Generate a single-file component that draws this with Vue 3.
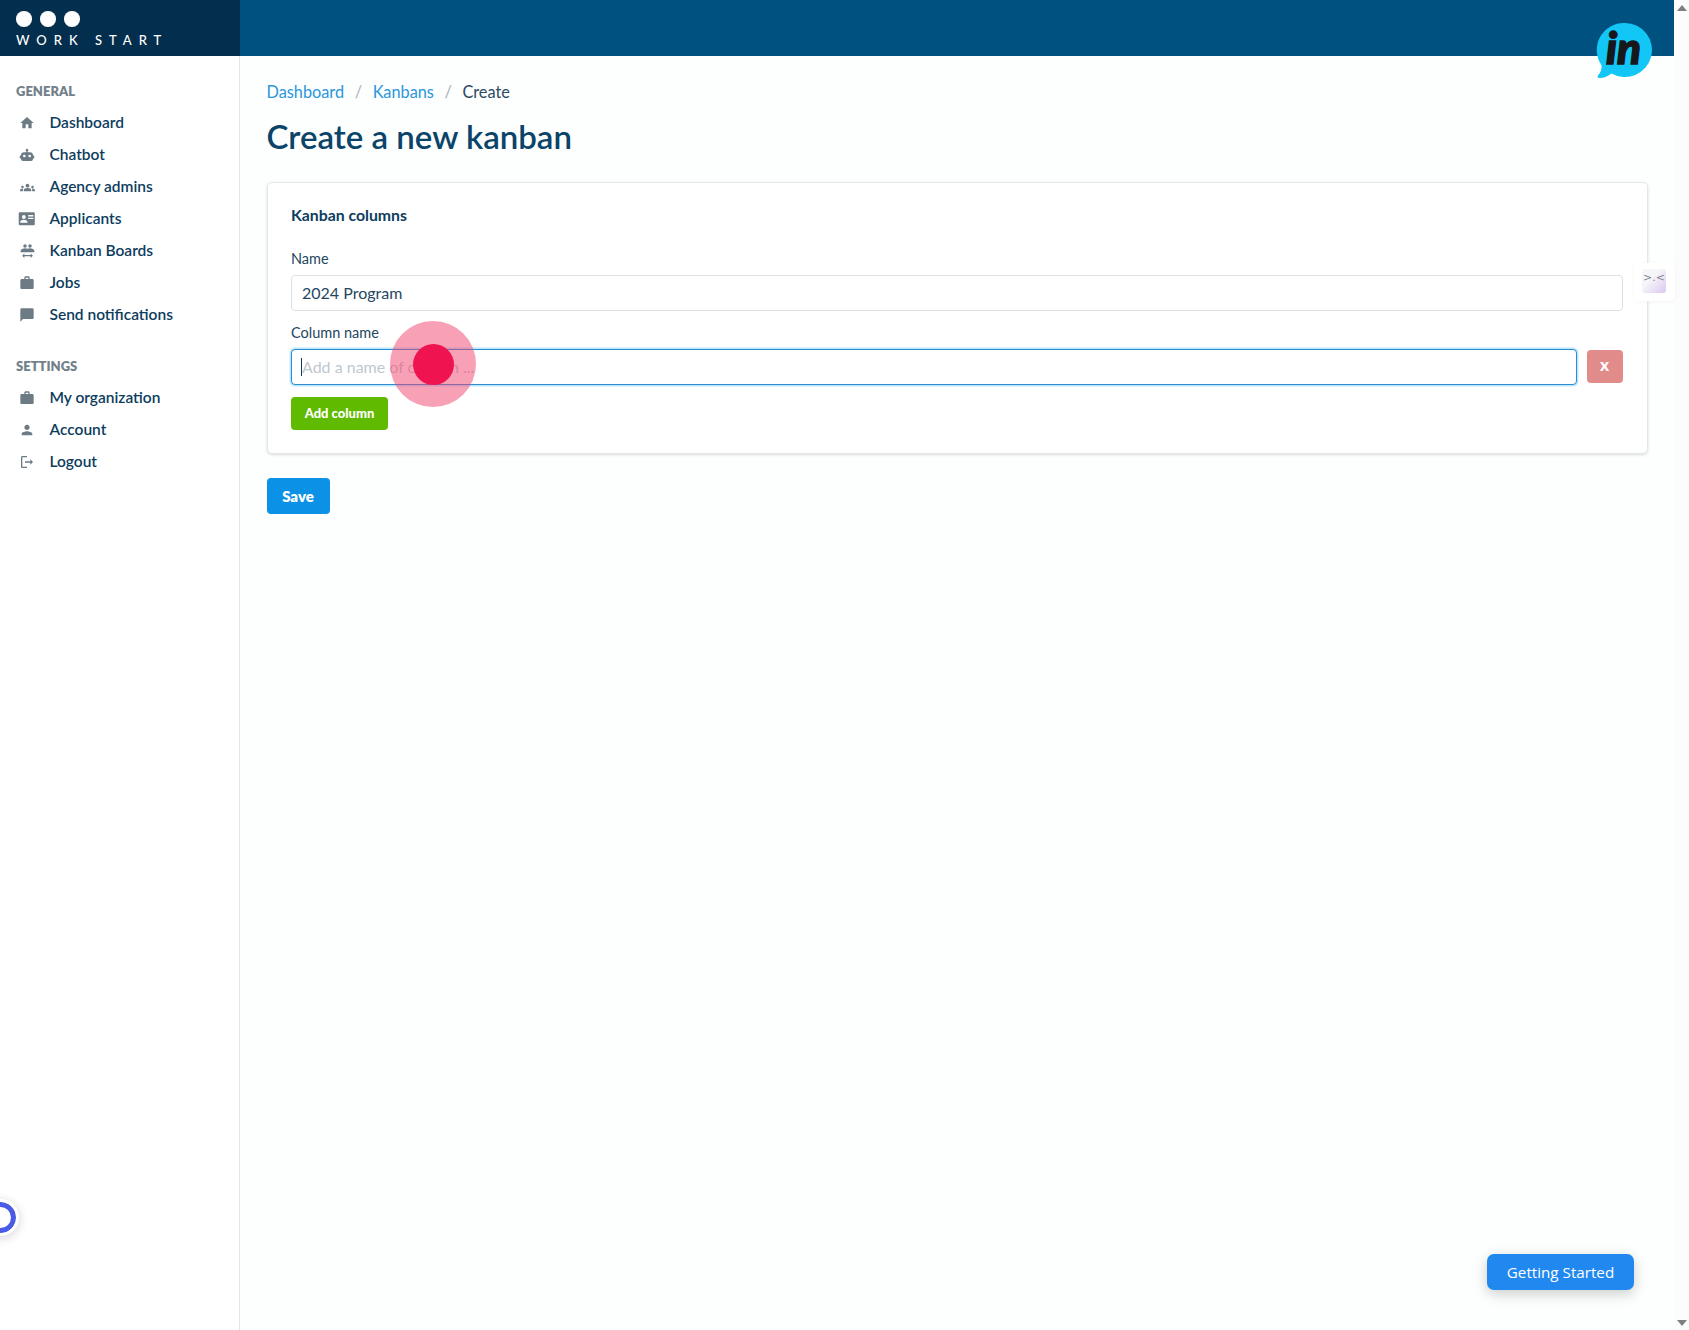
<script setup>
const icons = {
  home: 'M10 20v-6h4v6h5v-8h3L12 3 2 12h3v8z',
  robot: 'M12 2.500a2 2 0 0 1 1 3.730V8h3.500A4.500 4.500 0 0 1 21 12.200a2.300 2.300 0 0 1 2 2.300v1a2.300 2.300 0 0 1-2 2.300V18a3 3 0 0 1-3 3H6a3 3 0 0 1-3-3v-.2a2.300 2.300 0 0 1-2-2.300v-1a2.300 2.300 0 0 1 2-2.300A4.500 4.500 0 0 1 7.500 8H11V6.230A2 2 0 0 1 12 2.500zM8 11.500a2 2 0 1 0 0 4 2 2 0 0 0 0-4zm8 0a2 2 0 1 0 0 4 2 2 0 0 0 0-4z',
  groups: 'M12 12.750c1.630 0 3.070.39 4.240.9 1.080.48 1.760 1.560 1.760 2.730V18H6v-1.610c0-1.180.68-2.260 1.760-2.730 1.170-.52 2.610-.91 4.240-.91zM4 13c1.100 0 2-.9 2-2s-.9-2-2-2-2 .9-2 2 .9 2 2 2zm1.130 1.100c-.37-.06-.74-.1-1.130-.1-.99 0-1.930.21-2.780.58C.48 14.900 0 15.620 0 16.430V18h4.500v-1.610c0-.83.23-1.610.63-2.290zM20 13c1.100 0 2-.9 2-2s-.9-2-2-2-2 .9-2 2 .9 2 2 2zm4 3.430c0-.81-.48-1.530-1.220-1.850-.85-.37-1.790-.58-2.780-.58-.39 0-.76.04-1.130.1.4.68.63 1.460.63 2.290V18H24v-1.570zM12 6c1.660 0 3 1.340 3 3s-1.340 3-3 3-3-1.340-3-3 1.340-3 3-3z',
  card: 'M2.500 3h19A1.500 1.500 0 0 1 23 4.500v15a1.500 1.500 0 0 1-1.500 1.500h-19A1.500 1.500 0 0 1 1 19.500v-15A1.500 1.500 0 0 1 2.500 3zM8 7a2.600 2.600 0 1 0 0 5.200A2.600 2.600 0 0 0 8 7zm-5 10.500h10v-1.200c0-1.800-3.300-2.800-5-2.800s-5 1-5 2.800zM14 7v2h7V7zm0 3.500v2h7v-2z',
  kanban: 'M8 1a2.800 2.800 0 1 1 0 5.600A2.800 2.800 0 0 1 8 1zm8 0a2.800 2.800 0 1 1 0 5.600A2.800 2.800 0 0 1 16 1zM1 14v-2.500C1 9 5 7.500 8 7.500c1.600 0 3 .3 4 .8 1-.5 2.400-.8 4-.8 3 0 7 1.500 7 4V14zM7 16v2.500h10V16l3.500 3.500L17 23v-2.500H7V23l-3.500-3.500z',
  work: 'M20 6h-4V4c0-1.110-.89-2-2-2h-4c-1.110 0-2 .89-2 2v2H4c-1.110 0-1.990.89-1.990 2L2 19c0 1.110.89 2 2 2h16c1.110 0 2-.89 2-2V8c0-1.110-.89-2-2-2zm-6 0h-4V4h4v2z',
  chat: 'M20 2H4c-1.100 0-2 .9-2 2v18l4-4h14c1.100 0 2-.9 2-2V4c0-1.100-.9-2-2-2z',
  person: 'M12 12c2.210 0 4-1.790 4-4s-1.790-4-4-4-4 1.790-4 4 1.790 4 4 4zm0 2c-2.670 0-8 1.340-8 4v2h16v-2c0-2.660-5.330-4-8-4z',
  logout: 'M5 5h7V3H5c-1.100 0-2 .9-2 2v14c0 1.100.9 2 2 2h7v-2H5V5zm16 7l-4-4v3H9v2h8v3l4-4z'
}
const groups = [
  {
    title: 'GENERAL',
    items: [
      { label: 'Dashboard', icon: 'home' },
      { label: 'Chatbot', icon: 'robot' },
      { label: 'Agency admins', icon: 'groups' },
      { label: 'Applicants', icon: 'card' },
      { label: 'Kanban Boards', icon: 'kanban' },
      { label: 'Jobs', icon: 'work' },
      { label: 'Send notifications', icon: 'chat' }
    ]
  },
  {
    title: 'SETTINGS',
    items: [
      { label: 'My organization', icon: 'work' },
      { label: 'Account', icon: 'person' },
      { label: 'Logout', icon: 'logout' }
    ]
  }
]
</script>

<template>
  <div class="page">
    <div class="app">
      <header class="topbar">
        <div class="brand">
          <div class="dots"><i></i><i></i><i></i></div>
          <div class="wordmark">WORK START</div>
        </div>
      </header>
      <div class="body">
        <aside class="sidebar">
          <section v-for="g in groups" :key="g.title" class="group">
            <h4 class="group-title">{{ g.title }}</h4>
            <a v-for="item in g.items" :key="item.label" class="nav-item">
              <span class="icon-box">
                <svg class="nav-icon" :class="'i-' + item.icon" viewBox="0 0 24 24"><path :d="icons[item.icon]" fill-rule="evenodd" /></svg>
              </span>
              <span>{{ item.label }}</span>
            </a>
          </section>
        </aside>
        <main class="content">
          <nav class="crumbs">
            <a>Dashboard</a><span class="sep">/</span><a>Kanbans</a><span class="sep">/</span><span class="current">Create</span>
          </nav>
          <h1 class="title">Create a new kanban</h1>
          <form class="card" @submit.prevent>
            <h3 class="card-title">Kanban columns</h3>
            <label class="label">Name</label>
            <input class="input" value="2024 Program" />
            <label class="label label-second">Column name</label>
            <div class="col-row">
              <div class="input focused"><span class="caret"></span><span class="placeholder">Add a name of column ...</span></div>
              <button class="btn-x" type="button">x</button>
            </div>
            <button class="btn-add" type="button">Add column</button>
          </form>
          <button class="btn-save" type="button">Save</button>
        </main>
      </div>
    </div>
    <div class="scrollbar">
      <span class="arrow up"></span>
      <span class="arrow down"></span>
    </div>

    <svg class="in-logo" viewBox="0 0 60 60">
      <path d="M30 2a27 27 0 1 1-13.500 50.400C13 55 8 57.500 4 57c-1.500-.2-1.800-1.700-.8-2.800 2.500-2.700 3.800-6 3.300-10A27 27 0 0 1 30 2z" fill="#12c6f5" />
      <text x="11" y="43" class="in-text">in</text>
    </svg>
    <div class="click-outer"><div class="click-inner"></div></div>
    <div class="side-widget">
      <div class="face">&gt;.&lt;</div>
    </div>
    <div class="ring"></div>
    <button class="getting-started" type="button">Getting Started</button>
  </div>
</template>

<style>
html, body { margin: 0; background: #fff; }
</style>

<style scoped>
.page { position: relative; display: flex; width: 1689px; height: 1330px; overflow: hidden; font-family: "Lato", "Open Sans", sans-serif; color: #0d3d5e; background: #fdfefe; }
.app { flex: 1; min-width: 0; display: flex; flex-direction: column; }
.scrollbar { width: 15px; background: #fcfcfc; display: flex; flex-direction: column; justify-content: space-between; align-items: center; padding: 5px 0 4px; box-sizing: border-box; }
.arrow { width: 0; height: 0; border-left: 5px solid transparent; border-right: 5px solid transparent; }
.arrow.up { border-bottom: 6px solid #7f7f7f; }
.arrow.down { border-top: 6px solid #7f7f7f; }

.topbar { height: 56px; flex: none; background: #005180; display: flex; }
.brand { width: 240px; background: #032e4d; padding: 11px 0 0 16px; box-sizing: border-box; }
.dots { display: flex; gap: 8.500px; }
.dots i { width: 15.500px; height: 15.500px; border-radius: 50%; background: #fff; display: block; }
.wordmark { margin-top: 6px; color: #fff; font-size: 13px; font-weight: 500; letter-spacing: 7px; line-height: 15px; white-space: pre; }

.body { flex: 1; display: flex; min-height: 0; }
.sidebar { width: 240px; flex: none; box-sizing: border-box; border-right: 1px solid #e3e6e8; padding-top: 29px; background: #fff; }
.group { margin-bottom: 29.500px; }
.group-title { margin: 0 0 8px 16px; font-size: 13px; line-height: 13px; font-weight: 800; color: #72808a; }
.nav-item { display: flex; align-items: center; height: 32px; padding-left: 16px; font-size: 15.500px; font-weight: 600; color: #0d3d5e; }
.icon-box { width: 22px; height: 18px; margin-right: 11.500px; flex: none; display: flex; align-items: center; justify-content: center; transform: translateY(1px); }
.nav-icon { width: 16px; height: 16px; fill: #6d7b85; flex: none; }
.i-card { width: 17.500px; height: 17.500px; }
.i-groups { width: 15px; height: 15px; }
.i-kanban { width: 15px; height: 16px; }

.content { flex: 1; min-width: 0; padding: 27px 26.500px 0 26.500px; }
.crumbs { display: flex; align-items: center; font-size: 16.300px; line-height: 18px; color: #2b4a60; }
.crumbs a { color: #2a97db; }
.sep { color: #a9b2b8; margin: 0 10.600px; }
.title { margin: 15px 0 0; font-size: 33px; line-height: 40px; font-weight: 600; color: #0a4468; }
.card { margin-top: 26px; height: 272px; box-sizing: border-box; padding: 23px 24px 0 23.500px; border: 1px solid #e4e8ea; border-radius: 5px; background: #fff; box-shadow: 0 1px 3px rgba(0,0,0,.14); display: flex; flex-direction: column; align-items: stretch; }
.card-title { margin: 0; font-size: 15.800px; line-height: 18px; font-weight: 700; color: #0d3d5e; }
.label { display: block; margin-top: 27px; margin-bottom: 8px; font-size: 14.500px; line-height: 16px; color: #24475f; }
.label-second { margin-top: 14px; margin-bottom: 8px; }
.input { height: 36px; box-sizing: border-box; width: 100%; border: 1px solid #dce1e4; border-radius: 4px; padding: 0 10px 2px; font: inherit; font-size: 16px; color: #24475f; background: #fff; outline: none; }
.col-row { display: flex; align-items: center; gap: 10px; }
.focused { flex: 1; width: auto; display: flex; align-items: center; border: 1px solid #2a8cd4; box-shadow: 0 0 0 1.500px #bfe6ff; padding: 0 9px; }
.caret { width: 1px; height: 18px; background: #0d3d5e; flex: none; }
.placeholder { color: #c0c8ce; padding-bottom: 2px; }
.btn-x { width: 36px; height: 33px; margin-top: -2px; border: 0; border-radius: 4px; background: #e28b8b; color: #fff; font: inherit; font-size: 17px; font-weight: 900; padding: 0 0 3px; }
.btn-add { margin-top: 12px; align-self: flex-start; width: 97px; height: 33px; border: 0; border-radius: 4px; background: #5fba00; color: #fff; font: inherit; font-size: 13px; font-weight: 900; padding: 0 0 2px; }
.btn-save { display: block; margin-top: 24px; width: 63px; height: 36px; border: 0; border-radius: 4px; background: #0b92e6; color: #fff; font: inherit; font-size: 15px; font-weight: 800; padding: 0 0 1px; }

.in-logo { position: absolute; left: 1595px; top: 21px; width: 60px; height: 60px; }
.in-text { font-family: "Lato", sans-serif; font-size: 44px; font-weight: 900; font-style: italic; fill: #16181c; stroke: #16181c; stroke-width: 1.500px; }
.click-outer { position: absolute; left: 390px; top: 321px; width: 86px; height: 86px; border-radius: 50%; background: rgba(242, 67, 110, .5); display: flex; align-items: center; justify-content: center; }
.click-inner { width: 41px; height: 41px; border-radius: 50%; background: #ef1450; }
.side-widget { position: absolute; left: 1634px; top: 263px; width: 41px; height: 38px; box-sizing: border-box; padding: 6px 0 0 8px; background: #fff; border-radius: 5px; box-shadow: 0 1px 4px rgba(0,0,0,.04); }
.face { width: 24px; height: 24px; border-radius: 3px; background: linear-gradient(135deg, #f6f5f8 40%, #dcc7f0); color: #7c8490; font-size: 11px; line-height: 18px; text-align: center; font-family: "DejaVu Sans", sans-serif; }
.ring { position: absolute; left: -15px; top: 1202px; width: 21px; height: 21px; box-sizing: content-box; border: 5px solid #4a5be6; border-radius: 50%; outline: 3.500px solid #fff; box-shadow: 0 2px 10px 4px rgba(0,0,0,.14); background: #fff; }
.getting-started { position: absolute; left: 1487px; top: 1254px; width: 147px; height: 36px; border: 0; border-radius: 7px; background: #2188f0; color: #fff; font-family: "Open Sans", sans-serif; font-size: 15.200px; padding: 0; box-shadow: 0 4px 14px rgba(0,0,0,.2); }
</style>
